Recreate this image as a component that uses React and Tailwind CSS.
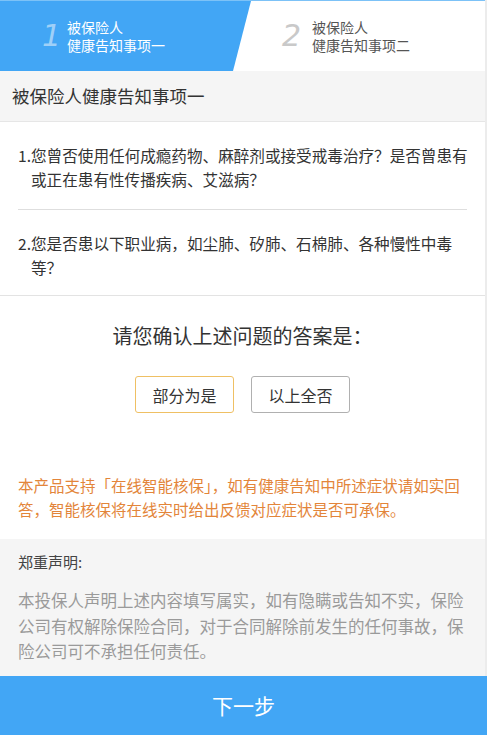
import React from "react";

const FONT = "font-['Noto_Sans_CJK_SC','Noto_Sans',sans-serif]";

const questions = [
    { no: "1.", text: "您曾否使用任何成瘾药物、麻醉剂或接受戒毒治疗？是否曾患有或正在患有性传播疾病、艾滋病？" },
    { no: "2.", text: "您是否患以下职业病，如尘肺、矽肺、石棉肺、各种慢性中毒等？" },
];

const App = () => {
    return (
        <div className={`${FONT} w-full min-h-screen bg-white flex flex-col`}>
            <div className="flex-1 flex flex-col border-r-2 border-[#ececec]">
                {/* step tabs */}
                <div className="h-[71px] flex bg-white border-t border-[#7cc2f7]">
                    <div className="w-[251px] bg-[#42a6f5] flex items-center pl-[42px] [clip-path:polygon(0_0,100%_0,233px_100%,0_100%)]">
                        <span className="font-['DejaVu_Sans',sans-serif] italic font-extralight text-[30px] leading-none text-[#9fd0f8] w-[25px]">1</span>
                        <div className="text-white text-[14px] leading-[18px]">
                            <div>被保险人</div>
                            <div>健康告知事项一</div>
                        </div>
                    </div>
                    <div className="flex-1 flex items-center pl-[31px]">
                        <span className="font-['DejaVu_Sans',sans-serif] italic font-extralight text-[30px] leading-none text-[#c9c9c9] w-[30px]">2</span>
                        <div className="text-[#555] text-[14px] leading-[18px]">
                            <div>被保险人</div>
                            <div>健康告知事项二</div>
                        </div>
                    </div>
                </div>

                <div className="h-[51px] bg-[#f5f5f5] border-b border-[#e6e6e6] flex items-center pl-3 text-[17.5px] text-[#333]">
                    被保险人健康告知事项一
                </div>

                {/* questions */}
                <div className="pl-[18px] pr-[10px] pt-[21px] pb-[16px] border-b border-[#e3e3e3]">
                    {questions.map((q, i) => (
                        <div key={q.no}>
                            {i > 0 && <div className="h-px bg-[#dedede] mt-[18px] mb-[21px] mr-[8px]" />}
                            <div className="flex text-[15.6px] leading-[24px] text-[#333]">
                                <span className="shrink-0">{q.no}</span>
                                <span>{q.text}</span>
                            </div>
                        </div>
                    ))}
                </div>

                {/* answer */}
                <div className="pt-[26px] pb-[18px]">
                    <p className="text-center text-[20px] leading-[28px] text-[#333]">请您确认上述问题的答案是：</p>
                    <div className="mt-[26px] flex justify-center gap-[17px]">
                        <button className="w-[99px] h-[37px] rounded-[3px] border border-[#efc064] text-[16px] text-[#333]">部分为是</button>
                        <button className="w-[99px] h-[37px] rounded-[3px] border border-[#b0b0b0] text-[16px] text-[#333]">以上全否</button>
                    </div>
                    <p className="mt-[61px] px-[18px] text-[15.5px] leading-[23.5px] text-[#e3853a]">
                        本产品支持「在线智能核保」，如有健康告知中所述症状请如实回答，智能核保将在线实时给出反馈对应症状是否可承保。
                    </p>
                </div>

                {/* declaration */}
                <div className="flex-1 bg-[#f5f5f5] px-[18px] pt-[12px] pb-[11px]">
                    <div className="text-[15px] leading-[22px] text-[#444]">郑重声明:</div>
                    <p className="mt-[15px] text-[16.5px] leading-[25.5px] text-[#9a9a9a]">
                        本投保人声明上述内容填写属实，如有隐瞒或告知不实，保险公司有权解除保险合同，对于合同解除前发生的任何事故，保险公司可不承担任何责任。
                    </p>
                </div>
            </div>

            <button className="h-[61px] w-full bg-[#42a6f5] text-white text-[21px]">下一步</button>
        </div>
    );
};

export default App;
